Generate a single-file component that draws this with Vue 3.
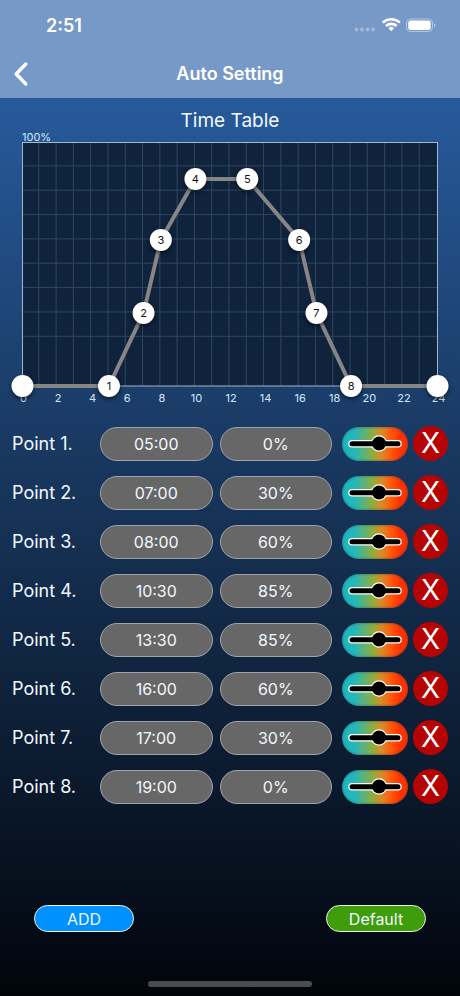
<script setup>
import { ref, computed } from 'vue'

const defaults = [
  { time: '05:00', level: 0 },
  { time: '07:00', level: 30 },
  { time: '08:00', level: 60 },
  { time: '10:30', level: 85 },
  { time: '13:30', level: 85 },
  { time: '16:00', level: 60 },
  { time: '17:00', level: 30 },
  { time: '19:00', level: 0 }
]

const copyDefaults = () => defaults.map((p) => ({ ...p }))
const points = ref(copyDefaults())

const left = 22.5
const top = 15.5
const width = 415
const height = 243.5
const hour = width / 24

const hourLines = Array.from({ length: 23 }, (_, i) => left - 1 + (i + 1) * hour)
const levelLines = Array.from({ length: 8 }, (_, i) => top - 1 + (i + 1) * (height / 10))
const hourLabels = Array.from({ length: 13 }, (_, i) => ({ text: i * 2, x: left + 1 + i * 2 * hour }))

// Markers snap to the full hour.
const nodes = computed(() => [
  { label: '', x: left, y: top + height },
  ...points.value.map((p, i) => ({
    label: i + 1,
    x: left + parseInt(p.time, 10) * hour,
    y: top + height * (1 - p.level / 100)
  })),
  { label: '', x: left + width, y: top + height }
])
const path = computed(() => nodes.value.map((n) => `${n.x},${n.y}`).join(' '))

const remove = (i) => points.value.splice(i, 1)
const add = () => points.value.push({ time: '20:00', level: 0 })
const reset = () => { points.value = copyDefaults() }
</script>

<template>
  <div class="screen">
    <header class="header">
      <div class="status">
        <span class="clock">2:51</span>
        <svg class="status-icons" viewBox="0 0 84 16" aria-hidden="true">
          <g fill="#a0b8da">
            <circle cx="4.500" cy="12.500" r="2" />
            <circle cx="10" cy="12.500" r="2" />
            <circle cx="15.500" cy="12.500" r="2" />
            <circle cx="21" cy="12.500" r="2" />
          </g>
          <g fill="none" stroke="#fff" stroke-width="2.600">
            <path d="M30.800 5.600a12.300 12.300 0 0 1 17 0" />
            <path d="M34 9a7.700 7.700 0 0 1 10.600 0" />
          </g>
          <path d="M36.500 11.200a4 4 0 0 1 5.600 0L39.300 14.200z" fill="#fff" />
          <rect x="54.500" y="2" width="26" height="12.500" rx="4" fill="none" stroke="#b3c6e0" />
          <rect x="56.200" y="3.600" width="22.600" height="9.300" rx="2.600" fill="#fff" />
          <path d="M82 6.300v4c1.800-.5 1.800-3.500 0-4z" fill="#b3c6e0" />
        </svg>
      </div>
      <div class="nav">
        <button class="back" type="button" aria-label="Back">
          <svg viewBox="0 0 16 26" aria-hidden="true">
            <path d="M12.800 3L3.200 13l9.600 10" fill="none" stroke="#fff" stroke-width="3.400" stroke-linecap="round" stroke-linejoin="round" />
          </svg>
        </button>
        <h1>Auto Setting</h1>
      </div>
    </header>

    <main class="main">
      <h2>Time Table</h2>
      <svg class="chart" viewBox="0 0 460 282" role="img" aria-label="Time Table">
        <rect :x="left" :y="top" :width="width" :height="height" fill="#0f233d" />
        <g class="grid">
          <line v-for="x in hourLines" :key="'h' + x" :x1="x" :x2="x" :y1="top" :y2="top + height" />
          <line v-for="y in levelLines" :key="'l' + y" :x1="left" :x2="left + width" :y1="y" :y2="y" />
        </g>
        <rect class="frame" :x="left" :y="top" :width="width" :height="height" />
        <text class="axis" x="22" y="14">100%</text>
        <text v-for="l in hourLabels" :key="l.text" class="axis hour" :x="l.x" y="275">{{ l.text }}</text>
        <polyline class="curve" :points="path" />
        <g v-for="(n, i) in nodes" :key="i">
          <circle class="node" :cx="n.x" :cy="n.y" r="11" />
          <text class="node-label" :x="n.x" :y="n.y + 4">{{ n.label }}</text>
        </g>
      </svg>

      <ul class="points">
        <li v-for="(p, i) in points" :key="i" class="point">
          <span class="name">Point {{ i + 1 }}.</span>
          <button class="pill" type="button">{{ p.time }}</button>
          <button class="pill level" type="button">{{ p.level }}%</button>
          <button class="color" type="button" aria-label="Color">
            <svg viewBox="0 0 66 34" aria-hidden="true">
              <g fill="#000" stroke="#fff" stroke-width="2.600">
                <rect x="7.500" y="14.200" width="51" height="5" rx="2.500" />
                <circle cx="37" cy="16.500" r="7" />
              </g>
              <g fill="#000">
                <rect x="7.500" y="14.200" width="51" height="5" rx="2.500" />
                <circle cx="37" cy="16.500" r="7" />
              </g>
            </svg>
          </button>
          <button class="remove" type="button" @click="remove(i)">X</button>
        </li>
      </ul>
    </main>

    <footer class="footer">
      <div class="actions">
        <button class="action add" type="button" @click="add">ADD</button>
        <button class="action default" type="button" @click="reset">Default</button>
      </div>
      <div class="home-bar"></div>
    </footer>
  </div>
</template>

<style>
body {
  margin: 0;
}
</style>

<style scoped>
.screen {
  display: flex;
  flex-direction: column;
  min-height: 100vh;
  background: linear-gradient(#2b63ab, #173459 50%, #01050b);
  color: #f2f8ff;
  font-family: Inter, "Liberation Sans", sans-serif;
}

button {
  box-sizing: border-box;
  margin: 0;
  padding: 0;
  border: 0;
  background: none;
  color: inherit;
  font-family: inherit;
  cursor: pointer;
}

svg {
  display: block;
}

.header {
  background: #7799c7;
}

.status {
  display: flex;
  align-items: center;
  justify-content: space-between;
  height: 50px;
  padding: 0 24px 0 46px;
}

.clock {
  font-size: 18px;
  font-weight: 600;
  color: #fff;
}

.status-icons {
  width: 84px;
  height: 16px;
}

.nav {
  display: grid;
  grid-template-columns: 44px 1fr 44px;
  align-items: center;
  height: 48px;
}

.back {
  justify-self: start;
  padding: 0 15px 0 13px;
}

.back svg {
  width: 16px;
  height: 26px;
}

h1 {
  margin: 0;
  font-size: 18px;
  font-weight: 600;
  line-height: 24px;
  text-align: center;
  color: #fff;
}

h2 {
  margin: 0;
  padding-top: 9px;
  font-size: 19px;
  font-weight: 400;
  line-height: 28px;
  text-align: center;
}

.main {
  display: flex;
  flex-direction: column;
}

.chart {
  width: 100%;
  margin-top: -8px;
  overflow: visible;
}

.grid line {
  stroke: #30475f;
  stroke-width: 1;
}

.frame {
  fill: none;
  stroke: #a3b7cd;
  stroke-width: 1;
}

.axis {
  fill: #d5e9fa;
  font-size: 11px;
}

.hour {
  text-anchor: middle;
}

.curve {
  fill: none;
  stroke: #878585;
  stroke-width: 4;
}

.node {
  fill: #fff;
  filter: drop-shadow(0 2px 2px rgba(0, 0, 0, 0.6));
}

.node-label {
  fill: #111;
  font-size: 11px;
  text-anchor: middle;
}

.points {
  display: grid;
  gap: 15px;
  margin: 17px 0 0;
  padding: 0 12px;
  list-style: none;
}

.point {
  display: grid;
  grid-template-columns: 88px 1fr 7px 1fr 10px 66px 5px 35px;
  align-items: center;
  height: 34px;
}

.name {
  font-size: 18px;
}

.pill {
  height: 34px;
  border: 1px solid #a0a3a8;
  border-radius: 17px;
  background: #676767;
  font-size: 16px;
}

.level {
  grid-column: 4;
}

.color {
  grid-column: 6;
  height: 34px;
  border-radius: 17px;
  background: linear-gradient(90deg, #20b8bd 18%, #5fb277 34%, #94ab38 48%, #dc8a28 60%, #ff5a0c 74%, #ff3300 88%);
  box-shadow: inset 0 0 3px rgba(20, 50, 80, 0.6);
}

.remove {
  grid-column: 8;
  width: 35px;
  height: 35px;
  border-radius: 50%;
  background: #b60303;
  color: #fff;
  font-size: 28px;
  line-height: 35px;
}

.footer {
  margin-top: auto;
  padding-bottom: 9px;
}

.actions {
  display: flex;
  justify-content: space-between;
  padding: 0 34px 49px;
}

.action {
  width: 100px;
  height: 27px;
  border: 1px solid #e9f5ea;
  border-radius: 14px;
  font-size: 16px;
}

.add {
  background: #0090ff;
}

.default {
  background: #3f9c0b;
}

.home-bar {
  width: 164px;
  height: 6px;
  margin: 0 auto;
  border-radius: 3px;
  background: #4b4c50;
}
</style>
